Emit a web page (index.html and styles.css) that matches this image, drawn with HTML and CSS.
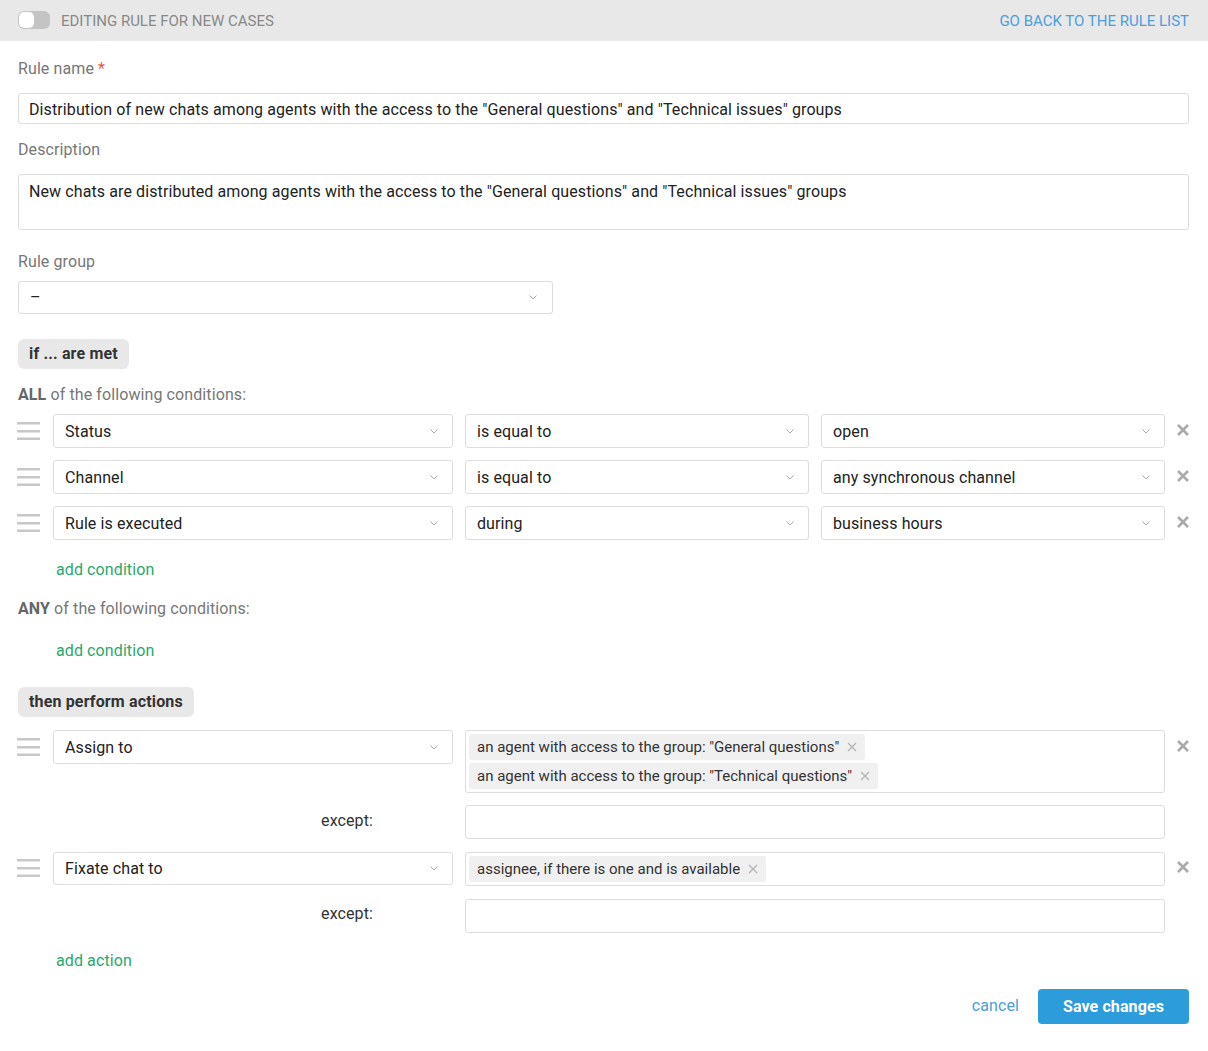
FILE: index.html
```html
<!DOCTYPE html>
<html lang="en">
<head>
<meta charset="utf-8">
<title>Editing rule</title>
<link rel="stylesheet" href="styles.css">
</head>
<body>
<header class="topbar">
  <div class="topbar-left">
    <span class="toggle"><span class="knob"></span></span>
    <span class="title">Editing rule for new cases</span>
  </div>
  <a class="back" href="#">Go back to the rule list</a>
</header>

<main class="content">
  <div class="label label-first">Rule name <span class="req">*</span></div>
  <div class="input">Distribution of new chats among agents with the access to the "General questions" and "Technical issues" groups</div>

  <div class="label">Description</div>
  <div class="textarea">New chats are distributed among agents with the access to the "General questions" and "Technical issues" groups</div>

  <div class="label label-group">Rule group</div>
  <div class="select select-group"><span>–</span><svg class="chev" viewBox="0 0 8 5"><path d="M0.5 0.5 L4 4 L7.5 0.5" /></svg></div>

  <div class="pill pill-if">if ... are met</div>

  <div class="sub"><b>ALL</b> of the following conditions:</div>

  <div class="rows">
    <div class="crow">
      <svg class="handle" viewBox="0 0 23 18"><rect x="0" y="0" width="23" height="2.5"/><rect x="0" y="8" width="23" height="2.5"/><rect x="0" y="15.5" width="23" height="2.5"/></svg>
      <div class="select"><span>Status</span><svg class="chev" viewBox="0 0 8 5"><path d="M0.5 0.5 L4 4 L7.5 0.5" /></svg></div>
      <div class="select"><span>is equal to</span><svg class="chev" viewBox="0 0 8 5"><path d="M0.5 0.5 L4 4 L7.5 0.5" /></svg></div>
      <div class="select"><span>open</span><svg class="chev" viewBox="0 0 8 5"><path d="M0.5 0.5 L4 4 L7.5 0.5" /></svg></div>
      <svg class="remove" viewBox="0 0 12 12"><path d="M1 1 L11 11 M11 1 L1 11"/></svg>
    </div>
    <div class="crow">
      <svg class="handle" viewBox="0 0 23 18"><rect x="0" y="0" width="23" height="2.5"/><rect x="0" y="8" width="23" height="2.5"/><rect x="0" y="15.5" width="23" height="2.5"/></svg>
      <div class="select"><span>Channel</span><svg class="chev" viewBox="0 0 8 5"><path d="M0.5 0.5 L4 4 L7.5 0.5" /></svg></div>
      <div class="select"><span>is equal to</span><svg class="chev" viewBox="0 0 8 5"><path d="M0.5 0.5 L4 4 L7.5 0.5" /></svg></div>
      <div class="select"><span>any synchronous channel</span><svg class="chev" viewBox="0 0 8 5"><path d="M0.5 0.5 L4 4 L7.5 0.5" /></svg></div>
      <svg class="remove" viewBox="0 0 12 12"><path d="M1 1 L11 11 M11 1 L1 11"/></svg>
    </div>
    <div class="crow">
      <svg class="handle" viewBox="0 0 23 18"><rect x="0" y="0" width="23" height="2.5"/><rect x="0" y="8" width="23" height="2.5"/><rect x="0" y="15.5" width="23" height="2.5"/></svg>
      <div class="select"><span>Rule is executed</span><svg class="chev" viewBox="0 0 8 5"><path d="M0.5 0.5 L4 4 L7.5 0.5" /></svg></div>
      <div class="select"><span>during</span><svg class="chev" viewBox="0 0 8 5"><path d="M0.5 0.5 L4 4 L7.5 0.5" /></svg></div>
      <div class="select"><span>business hours</span><svg class="chev" viewBox="0 0 8 5"><path d="M0.5 0.5 L4 4 L7.5 0.5" /></svg></div>
      <svg class="remove" viewBox="0 0 12 12"><path d="M1 1 L11 11 M11 1 L1 11"/></svg>
    </div>
  </div>

  <a class="add add-cond1" href="#">add condition</a>

  <div class="sub sub-any"><b>ANY</b> of the following conditions:</div>

  <a class="add add-cond2" href="#">add condition</a>

  <div class="pill pill-then">then perform actions</div>

  <div class="actions">
    <div class="arow">
      <svg class="handle" viewBox="0 0 23 18"><rect x="0" y="0" width="23" height="2.5"/><rect x="0" y="8" width="23" height="2.5"/><rect x="0" y="15.5" width="23" height="2.5"/></svg>
      <div class="select"><span>Assign to</span><svg class="chev" viewBox="0 0 8 5"><path d="M0.5 0.5 L4 4 L7.5 0.5" /></svg></div>
      <div class="tagbox">
        <span class="tag">an agent with access to the group: "General questions"<svg class="tx" viewBox="0 0 10 10"><path d="M1 1 L9 9 M9 1 L1 9"/></svg></span>
        <span class="tag">an agent with access to the group: "Technical questions"<svg class="tx" viewBox="0 0 10 10"><path d="M1 1 L9 9 M9 1 L1 9"/></svg></span>
      </div>
      <svg class="remove" viewBox="0 0 12 12"><path d="M1 1 L11 11 M11 1 L1 11"/></svg>
    </div>
    <div class="erow">
      <div class="except">except:</div>
      <div class="tagbox empty"></div>
    </div>
    <div class="arow arow2">
      <svg class="handle" viewBox="0 0 23 18"><rect x="0" y="0" width="23" height="2.5"/><rect x="0" y="8" width="23" height="2.5"/><rect x="0" y="15.5" width="23" height="2.5"/></svg>
      <div class="select select-short"><span>Fixate chat to</span><svg class="chev" viewBox="0 0 8 5"><path d="M0.5 0.5 L4 4 L7.5 0.5" /></svg></div>
      <div class="tagbox">
        <span class="tag">assignee, if there is one and is available<svg class="tx" viewBox="0 0 10 10"><path d="M1 1 L9 9 M9 1 L1 9"/></svg></span>
      </div>
      <svg class="remove" viewBox="0 0 12 12"><path d="M1 1 L11 11 M11 1 L1 11"/></svg>
    </div>
    <div class="erow erow2">
      <div class="except except2">except:</div>
      <div class="tagbox empty"></div>
    </div>
  </div>

  <a class="add add-action" href="#">add action</a>

  <div class="footer">
    <a class="cancel" href="#">cancel</a>
    <button class="save" type="button">Save changes</button>
  </div>
</main>
</body>
</html>
```

FILE: styles.css
```css
* { box-sizing: border-box; }

html, body {
  margin: 0;
  padding: 0;
  background: #ffffff;
  font-family: Roboto, "Liberation Sans", Arial, sans-serif;
  color: #222222;
}

a { text-decoration: none; }

.topbar {
  height: 41px;
  background: #e8e8e8;
  display: flex;
  align-items: center;
  justify-content: space-between;
  padding: 0 19px 0 18px;
}

.topbar-left {
  display: flex;
  align-items: center;
}

.toggle {
  width: 32px;
  height: 18px;
  border-radius: 6px;
  background: #c4c4c4;
  display: flex;
  align-items: center;
  padding-left: 1px;
  margin-top: -1px;
}

.knob {
  width: 15px;
  height: 16px;
  border-radius: 5px;
  background: #ffffff;
}

.title {
  margin-left: 11px;
  font-size: 15px;
  text-transform: uppercase;
  color: #888888;
}

.back {
  font-size: 15px;
  text-transform: uppercase;
  color: #4a9fdc;
}

.content {
  padding: 0 19px 0 18px;
  letter-spacing: 0.1px;
}

.label {
  font-size: 16px;
  line-height: 20px;
  color: #777777;
  margin: 16px 0 14px;
}

.label-first { margin-top: 18px; }
.label-group { margin-top: 22px; margin-bottom: 9px; }

.req { color: #e55; }

.input {
  height: 31px;
  border: 1px solid #dddddd;
  border-radius: 3px;
  padding: 1px 10px 0;
  font-size: 16px;
  line-height: 29px;
  color: #222;
  white-space: nowrap;
  overflow: hidden;
}

.textarea {
  height: 56px;
  border: 1px solid #dddddd;
  border-radius: 3px;
  padding: 7px 10px 5px;
  font-size: 16px;
  line-height: 20px;
  color: #222;
}

.select {
  height: 34px;
  border: 1px solid #dddddd;
  border-radius: 3px;
  padding: 0 14px 0 11px;
  display: flex;
  align-items: center;
  justify-content: space-between;
  font-size: 16px;
  color: #222;
  background: #fff;
}

.select-group {
  width: 535px;
  height: 33px;
  padding-right: 15px;
}

.select-short { height: 33px; }

.chev {
  width: 8px;
  height: 5px;
  fill: none;
  stroke: #aaaaaa;
  stroke-width: 1;
}

.pill {
  display: inline-block;
  height: 30px;
  line-height: 30px;
  padding: 0 11px;
  background: #e8e8e8;
  border-radius: 6px;
  font-size: 16px;
  font-weight: 700;
  color: #333333;
  letter-spacing: 0.15px;
}

.pill-if { margin-top: 25px; }

.sub {
  font-size: 16px;
  line-height: 20px;
  color: #777777;
  margin-top: 16px;
}

.sub b { color: #666666; }

.rows {
  margin-top: 9px;
  display: flex;
  flex-direction: column;
  gap: 12px;
}

.crow {
  display: grid;
  grid-template-columns: 23px 400px 344px 344px 1fr;
  column-gap: 12px;
  align-items: center;
}

.handle {
  width: 23px;
  height: 18px;
  fill: #c8c8c8;
  margin-left: -1px;
}

.remove {
  width: 12px;
  height: 12px;
  fill: none;
  stroke: #aaaaaa;
  stroke-width: 2.6;
  justify-self: center;
  margin-top: -3px;
}

.add {
  display: block;
  font-size: 16px;
  line-height: 20px;
  color: #2aa86c;
  margin-left: 38px;
}

.add-cond1 { margin-top: 20px; }
.add-cond2 { margin-top: 22px; }
.add-action { margin-top: 18px; }

.sub-any { margin-top: 19px; }

.pill-then { margin-top: 26px; }

.actions {
  margin-top: 13px;
}

.arow {
  display: grid;
  grid-template-columns: 23px 400px 700px 1fr;
  column-gap: 12px;
  align-items: start;
}

.arow .handle { margin-top: 8px; }
.arow .remove { margin-top: 10px; }

.arow2 { margin-top: 13px; }
.arow2 .handle { margin-top: 7px; }
.arow2 .remove { margin-top: 9px; }

.tagbox {
  border: 1px solid #dddddd;
  border-radius: 3px;
  padding: 3px;
  display: flex;
  flex-direction: column;
  align-items: flex-start;
  gap: 3px;
  min-height: 33px;
  letter-spacing: 0;
}

.tagbox.empty { height: 34px; }

.tag {
  display: inline-flex;
  align-items: center;
  height: 26px;
  padding: 0 8px;
  background: #f0f0f0;
  border-radius: 3px;
  font-size: 15px;
  color: #333333;
  white-space: nowrap;
}

.tx {
  width: 10px;
  height: 10px;
  margin-left: 8px;
  fill: none;
  stroke: #b5b5b5;
  stroke-width: 1.4;
}

.erow {
  display: grid;
  grid-template-columns: 23px 400px 700px 1fr;
  column-gap: 12px;
  align-items: start;
  margin-top: 12px;
}

.erow2 { margin-top: 13px; }

.except {
  grid-column: 2;
  text-align: right;
  padding-right: 80px;
  padding-top: 6px;
  font-size: 16px;
  line-height: 20px;
  color: #333333;
}

.except2 { padding-top: 5px; }

.footer {
  display: flex;
  justify-content: flex-end;
  align-items: center;
  margin-top: 18px;
}

.cancel {
  font-size: 16px;
  color: #4a9fdc;
  margin-right: 19px;
  margin-bottom: 3px;
}

.save {
  width: 151px;
  height: 35px;
  border: none;
  border-radius: 4px;
  background: #2d9cdb;
  color: #ffffff;
  font-family: Roboto, "Liberation Sans", Arial, sans-serif;
  font-size: 16px;
  font-weight: 700;
  letter-spacing: 0.1px;
}
```
